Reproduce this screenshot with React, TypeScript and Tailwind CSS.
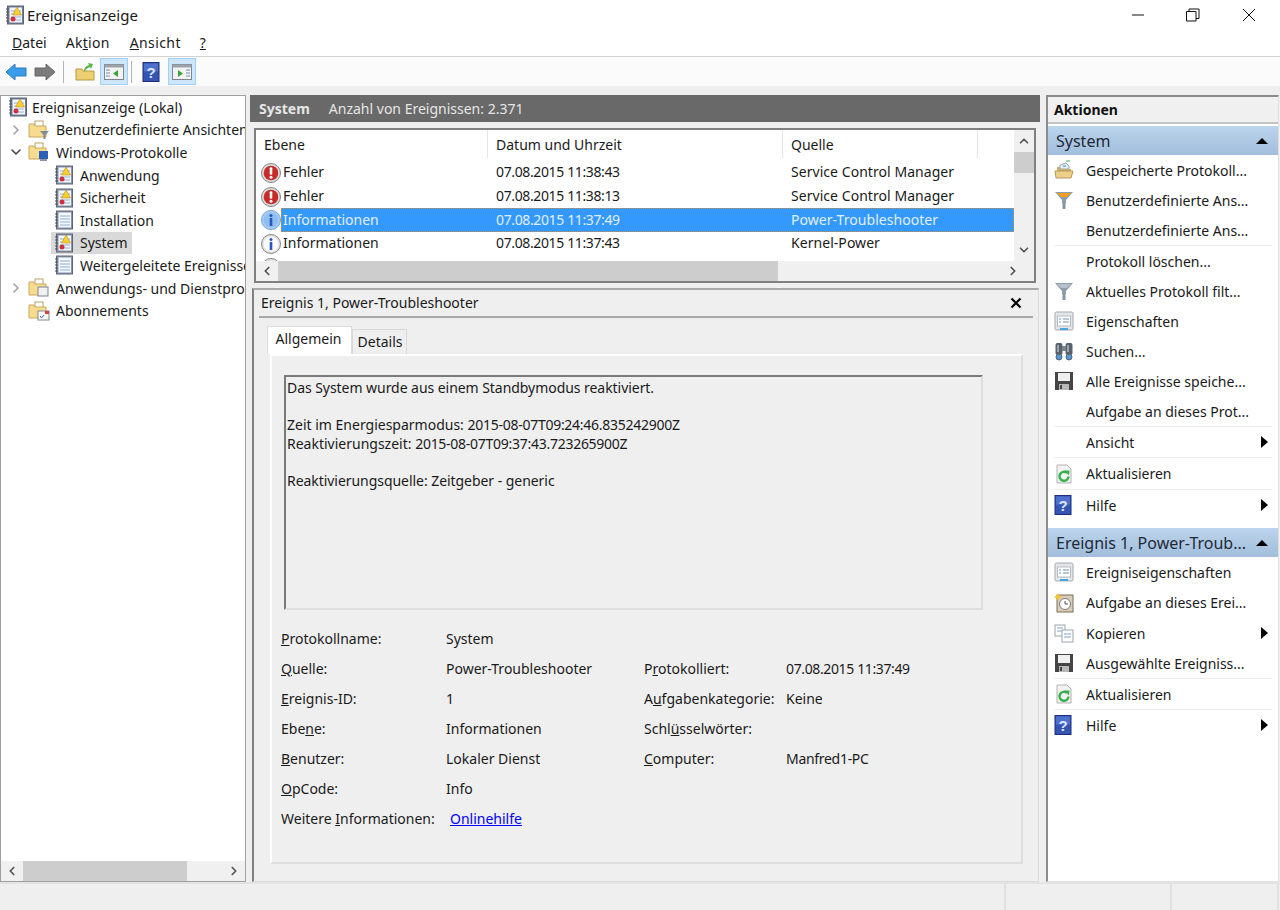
import type { ReactNode } from 'react'
import { ChevronDown, ChevronLeft, ChevronRight, ChevronUp } from 'lucide-react'

function LogIcon({ alert, dark }: { alert?: boolean; dark?: boolean }) {
  return (
    <svg width="20" height="20" viewBox="0 0 20 20" className="shrink-0">
      <rect x="2.500" y="1" width="16" height="18" fill={dark ? '#6f7d9c' : '#8996b0'} stroke="#5d6578" />
      <rect x="4.500" y="2.500" width="12.500" height="15" fill="#f5f7fb" />
      <path d="M1 4h3M1 7h3M1 10h3M1 13h3M1 16h3" stroke="#4f535c" />
      <path d="M6 6h10M6 9h10M6 12h10M6 15h10" stroke="#8fb0d8" />
      {alert && <path d="M12 2l4.500 8h-9z" fill="#f8cf2f" stroke="#c08f18" strokeWidth="0.6" />}
      {alert && <circle cx="8" cy="14" r="2.500" fill="#cf3040" />}
    </svg>
  )
}

function FolderIcon({ badge }: { badge?: ReactNode }) {
  return (
    <svg width="22" height="20" viewBox="0 0 22 20" className="shrink-0">
      <rect x="7" y="1" width="8" height="6" fill="#fff" stroke="#b9a26a" />
      <path d="M1 4h5l1 2h11v11H1z" fill="#f7dc8f" stroke="#c9a95c" />
      {badge}
    </svg>
  )
}

function ErrorIcon() {
  return (
    <svg width="20" height="20" viewBox="0 0 20 20" className="shrink-0">
      <circle cx="10" cy="10" r="9.500" fill="#dcdcdc" stroke="#858585" />
      <circle cx="10" cy="10" r="7.300" fill="#c92b2b" />
      <rect x="8.700" y="4.300" width="2.600" height="7.500" rx="1" fill="#fff" />
      <circle cx="10" cy="14.300" r="1.500" fill="#fff" />
    </svg>
  )
}

function InfoIcon({ selected }: { selected?: boolean }) {
  return (
    <svg width="20" height="20" viewBox="0 0 20 20" className="shrink-0">
      <circle cx="10" cy="10" r="9.500" fill={selected ? '#a9cdf2' : '#e4e4e4'} stroke={selected ? '#6fa4dc' : '#858585'} />
      <circle cx="10" cy="10" r="7.300" fill={selected ? '#8fbef0' : '#fbfbfb'} />
      <circle cx="10" cy="5.500" r="1.500" fill="#2a55c0" />
      <rect x="8.700" y="8" width="2.600" height="8" fill="#2a55c0" />
    </svg>
  )
}

function HelpIcon() {
  return (
    <svg width="18" height="20" viewBox="0 0 18 20" className="shrink-0">
      <rect x="1" y="0.500" width="16" height="19" fill="#3555b5" stroke="#1d2f78" />
      <rect x="2" y="1.500" width="14" height="8" fill="#4d70cc" />
      <text x="9" y="15.500" textAnchor="middle" fontSize="15" fontWeight="700" fill="#dfe6ff" fontFamily="Liberation Sans, sans-serif">?</text>
    </svg>
  )
}

function PaneIcon({ side }: { side: 'left' | 'right' }) {
  return (
    <svg width="20" height="18" viewBox="0 0 20 18">
      <rect x="0.500" y="1.500" width="19" height="15" fill="#f3f3f3" stroke="#7d8690" />
      <rect x="0.500" y="1.500" width="19" height="3" fill="#9aa3ab" />
      {side === 'left' ? (
        <>
          <path d="M2 7h4M2 10h4M2 13h4" stroke="#6f8fb5" />
          <path d="M14 7v7l-5-3.500z" fill="#3aa63a" />
        </>
      ) : (
        <>
          <path d="M14 7h4M14 10h4M14 13h4" stroke="#6f8fb5" />
          <path d="M6 7v7l5-3.500z" fill="#3aa63a" />
        </>
      )}
    </svg>
  )
}

function FunnelIcon({ color }: { color: string }) {
  return (
    <svg width="20" height="20" viewBox="0 0 20 20">
      <path d="M1 2h18l-7 8v3H8v-3z" fill="#8d9dad" />
      <path d="M3 3h14l-4 4H7z" fill={color} />
      <rect x="8.500" y="12" width="3" height="7" fill="#8495a6" />
    </svg>
  )
}

function PropsIcon() {
  return (
    <svg width="20" height="20" viewBox="0 0 20 20">
      <rect x="1" y="1" width="18" height="18" rx="1.500" fill="#e4e6e9" stroke="#a3a8ae" />
      <rect x="3.500" y="5" width="13" height="10" fill="#fff" stroke="#b5bac0" />
      <path d="M5 8h2M9 8h6M5 11h2M9 11h6" stroke="#6f8fb5" />
      <rect x="6" y="17" width="8" height="2" fill="#45a9e0" />
    </svg>
  )
}

function BinocularsIcon() {
  return (
    <svg width="20" height="20" viewBox="0 0 20 20">
      <rect x="1.500" y="2" width="7" height="12" rx="2" fill="#59626c" />
      <rect x="11.500" y="2" width="7" height="12" rx="2" fill="#59626c" />
      <rect x="3" y="4" width="2" height="7" fill="#9aa4ae" />
      <rect x="13" y="4" width="2" height="7" fill="#9aa4ae" />
      <rect x="8" y="5" width="4" height="5" fill="#7c858e" />
      <circle cx="5" cy="16" r="3" fill="#4f97d8" stroke="#59626c" />
      <circle cx="15" cy="16" r="3" fill="#4f97d8" stroke="#59626c" />
    </svg>
  )
}

function SaveIcon() {
  return (
    <svg width="20" height="20" viewBox="0 0 20 20">
      <path d="M1 1h18v18H1z" fill="#454545" />
      <rect x="4" y="2" width="12" height="8" fill="#efefef" />
      <rect x="5" y="13" width="10" height="6" fill="#b8b8b8" />
      <rect x="6" y="14" width="2" height="4" fill="#454545" />
    </svg>
  )
}

function RefreshIcon() {
  return (
    <svg width="20" height="20" viewBox="0 0 20 20">
      <path d="M3 1h10l4 4v14H3z" fill="#f2f2f2" stroke="#b3b3b3" />
      <path d="M14.500 12.500a4.500 4.500 0 1 1-1.500-3.600" fill="none" stroke="#35b04a" strokeWidth="2.400" />
      <path d="M10.500 6.500h5l-.5 5z" fill="#35b04a" />
    </svg>
  )
}

function OpenFolderIcon() {
  return (
    <svg width="20" height="20" viewBox="0 0 20 20">
      <path d="M12 1h4" stroke="#35b04a" />
      <path d="M6 9V5l6-2 3 3v3z" fill="#e8f1fb" stroke="#9ca7b2" />
      <path d="M9 6h3" stroke="#3c84d6" />
      <path d="M3 7h3v2h11v2H3z" fill="#c8ac68" />
      <path d="M1 11h18l-2 7H2z" fill="#ecd08a" stroke="#b9995a" />
    </svg>
  )
}

function ClockIcon() {
  return (
    <svg width="20" height="20" viewBox="0 0 20 20">
      <rect x="3" y="2" width="16" height="17" fill="#d9cdb9" stroke="#7d6e5a" />
      <circle cx="11" cy="11" r="5.500" fill="#fff" stroke="#7c7c7c" />
      <path d="M11 8v3h3" fill="none" stroke="#555" />
      <path d="M4 0l1.200 2.600L8 4 5.200 5.400 4 8 2.800 5.400 0 4l2.800-1.400z" fill="#f5c431" />
    </svg>
  )
}

function CopyIcon() {
  return (
    <svg width="20" height="20" viewBox="0 0 20 20">
      <rect x="1" y="2" width="10" height="11" fill="#fff" stroke="#9aa5b1" />
      <path d="M3 5h6M3 8h6" stroke="#7fa3cf" />
      <rect x="8" y="7" width="11" height="12" fill="#fff" stroke="#9aa5b1" />
      <path d="M10 11h7M10 14h7" stroke="#7fa3cf" />
    </svg>
  )
}

function Caret() {
  return <span className="w-0 h-0 border-y-[6px] border-y-transparent border-l-[7px] border-l-black" />
}

function TreeRow({ indent, arrow, icon, label, selected, tight }: { indent: string; arrow?: 'right' | 'down'; icon: ReactNode; label: string; selected?: boolean; tight?: boolean }) {
  return (
    <div className={`h-[22.6px] flex items-center whitespace-nowrap overflow-hidden ${indent}`}>
      {arrow && (
        <span className="w-[20px] shrink-0 flex justify-center">
          {arrow === 'right' ? <ChevronRight size={16} className="text-[#a0a0a0]" strokeWidth={2.400} /> : <ChevronDown size={16} className="text-[#444]" strokeWidth={2.400} />}
        </span>
      )}
      <span className={`flex items-center h-full ${selected ? 'bg-[#d9d9d9] pl-[3px] pr-[4px]' : 'pl-[2px] pr-[2px]'}`}>
        {icon}
        <span className={tight ? 'ml-[4px]' : 'ml-[6px]'}>{label}</span>
      </span>
    </div>
  )
}

function EventRow({ icon, level, time, source, selected }: { icon: ReactNode; level?: string; time?: string; source?: string; selected?: boolean }) {
  return (
    <div className="h-[23.7px] flex items-center whitespace-nowrap">
      <span className="w-[25px] pl-[5px] shrink-0">{icon}</span>
      <div className={`flex-1 h-full pb-[2px] flex items-center ${selected ? 'bg-[#3399ff] text-[#e0efff] outline-1 -outline-offset-1 outline-dotted outline-[#d58a3c]' : ''}`}>
        <span className="w-[215px] shrink-0 pl-[2px]">{level}</span>
        <span className="w-[295px] shrink-0 tracking-[-0.37px]">{time}</span>
        <span className="tracking-[0.05px]">{source}</span>
      </div>
    </div>
  )
}

function ActionRow({ icon, label, caret, h = 'h-[30px]' }: { icon?: ReactNode; label: string; caret?: boolean; h?: string }) {
  return (
    <div className={`${h} flex items-center pl-[6px] pr-[10px] whitespace-nowrap shrink-0`}>
      <span className="w-[32px] shrink-0 flex">{icon}</span>
      <span className="flex-1">{label}</span>
      {caret && <Caret />}
    </div>
  )
}

function Sep() {
  return <div className="h-px mx-[6px] bg-[#ececec] shrink-0" />
}

function SectionHead({ label }: { label: string }) {
  return (
    <div className="h-[29px] flex items-center justify-between pl-[8px] pr-[10px] bg-gradient-to-b from-[#bcd4ec] to-[#a2bedb] text-[16px] text-[#1e2a38] whitespace-nowrap shrink-0">
      <span>{label}</span>
      <span className="w-0 h-0 border-x-[6px] border-x-transparent border-b-[6px] border-b-black" />
    </div>
  )
}

function Field({ label, value, wide }: { label: ReactNode; value?: ReactNode; wide?: boolean }) {
  return (
    <>
      <span>{label}</span>
      <span className={wide ? 'col-span-3' : ''}>{value}</span>
    </>
  )
}

export default function App() {
  return (
    <div className="w-[1280px] h-[910px] overflow-hidden flex flex-col bg-[#efefef] text-[14px] text-[#1a1a1a] font-['Noto_Sans','Open_Sans',sans-serif]">
      <div className="h-[30px] bg-white flex items-center shrink-0">
        <span className="ml-[5px]"><LogIcon alert dark /></span>
        <span className="ml-[2px] text-[15px]">Ereignisanzeige</span>
        <div className="ml-auto flex items-center text-black">
          <svg width="14" height="14" viewBox="0 0 14 14" className="mr-[41px]"><path d="M1 7h12" stroke="#111" /></svg>
          <svg width="14" height="14" viewBox="0 0 14 14" className="mr-[42px]"><path d="M.5 3.500h9.500v9.500H.5zM3 3.500V1h10v9.500h-3" fill="none" stroke="#111" /></svg>
          <svg width="14" height="14" viewBox="0 0 14 14" className="mr-[24px]"><path d="M1 1l12 12M13 1L1 13" stroke="#111" /></svg>
        </div>
      </div>
      <div className="h-[27px] bg-white flex items-center pl-[12px] pb-[2px] border-b border-[#d2d2d2] shrink-0">
        <span><u>D</u>atei</span>
        <span className="ml-[19px] tracking-[0.3px]">Ak<u>t</u>ion</span>
        <span className="ml-[20px] tracking-[0.4px]"><u>A</u>nsicht</span>
        <span className="ml-[19px]"><u>?</u></span>
      </div>
      <div className="h-[29px] bg-[#fbfbfb] flex items-center pl-[5px] shrink-0">
        <svg width="22" height="18" viewBox="0 0 22 18"><path d="M1 9l9-8v4h11v8H10v4z" fill="#3b9be6" stroke="#2a78c0" /></svg>
        <svg width="22" height="18" viewBox="0 0 22 18" className="ml-[7px]"><path d="M21 9l-9-8v4H1v8h11v4z" fill="#7c7c7c" stroke="#666" /></svg>
        <span className="w-px h-[22px] bg-[#b5b5b5] ml-[7px]" />
        <svg width="20" height="20" viewBox="0 0 20 20" className="ml-[11px]">
          <path d="M1 7h6l1 2h11v9H1z" fill="#eccf71" stroke="#b59a4a" />
          <path d="M9 10c0-4 2-6 5-7l-1-2 5 1-2 5-1-2c-2 1-4 2-6 5z" fill="#59b848" />
        </svg>
        <span className="w-[28px] h-[27px] ml-[5px] bg-[#cde6fb] border border-[#9fd0f5] flex items-center justify-center"><PaneIcon side="left" /></span>
        <span className="w-px h-[22px] bg-[#b5b5b5] ml-[3px]" />
        <span className="ml-[10px]"><HelpIcon /></span>
        <span className="w-[28px] h-[27px] ml-[8px] bg-[#cde6fb] border border-[#9fd0f5] flex items-center justify-center"><PaneIcon side="right" /></span>
      </div>

      <div className="h-[9px] shrink-0" />

      <div className="flex-1 flex min-h-0">
        <div className="w-[246px] h-[787px] shrink-0 bg-white border border-[#a0a0a0] flex flex-col">
          <div className="flex-1 pl-[5px] overflow-hidden">
            <TreeRow indent="" icon={<LogIcon alert dark />} label="Ereignisanzeige (Lokal)" tight />
            <TreeRow indent="" arrow="right" icon={<FolderIcon badge={<path d="M12 11h9l-3.500 4v4h-2v-4z" fill="#7e8c9a" />} />} label="Benutzerdefinierte Ansichten" />
            <TreeRow indent="" arrow="down" icon={<FolderIcon badge={<><rect x="11" y="9" width="9" height="8" fill="#2d5fb8" /><rect x="12" y="17" width="7" height="2" fill="#8d98a6" /></>} />} label="Windows-Protokolle" />
            <TreeRow indent="pl-[46px]" icon={<LogIcon alert />} label="Anwendung" />
            <TreeRow indent="pl-[46px]" icon={<LogIcon alert />} label="Sicherheit" />
            <TreeRow indent="pl-[46px]" icon={<LogIcon />} label="Installation" />
            <TreeRow indent="pl-[45px]" icon={<LogIcon alert />} label="System" selected />
            <TreeRow indent="pl-[46px]" icon={<LogIcon />} label="Weitergeleitete Ereignisse" />
            <TreeRow indent="" arrow="right" icon={<FolderIcon badge={<rect x="10" y="9" width="10" height="9" fill="#f2f2f2" stroke="#7d8690" />} />} label="Anwendungs- und Dienstprotokolle" />
            <div className="pl-[20px]">
              <TreeRow indent="" icon={<FolderIcon badge={<><rect x="10" y="10" width="11" height="9" fill="#fff" stroke="#7d8690" /><rect x="17" y="10" width="4" height="3" fill="#d84040" /><path d="M12 15l1.500 2 2.500-3" fill="none" stroke="#2d5fb8" /></>} />} label="Abonnements" />
            </div>
          </div>
          <div className="h-[20px] bg-[#f0f0f0] flex items-center shrink-0 text-[#555]">
            <span className="w-[22px] flex justify-center"><ChevronLeft size={14} strokeWidth={3} /></span>
            <div className="flex-1 h-full">
              <div className="w-[164px] h-full bg-[#cdcdcd]" />
            </div>
            <span className="w-[22px] flex justify-center"><ChevronRight size={14} strokeWidth={3} /></span>
          </div>
        </div>

        <div className="w-[790px] ml-[4px] mr-[6px] shrink-0 flex flex-col h-[787px]">
          <div className="h-[27px] bg-[#696969] text-[#e6e6e6] flex items-center pl-[9px] shrink-0">
            <span className="font-bold">System</span>
            <span className="ml-[19px]">Anzahl von Ereignissen: 2.371</span>
          </div>
          <div className="h-[155px] mt-[6px] mx-[4px] bg-white border-2 border-[#808080] flex shrink-0 overflow-hidden">
            <div className="flex-1 flex flex-col min-w-0">
              <div className="flex-1 flex min-h-0">
                <div className="flex-1 min-w-0 overflow-hidden">
                  <div className="h-[31px] pb-[3px] flex items-center">
                    <span className="w-[232px] h-full flex items-center pl-[8px] border-r border-[#e5e5e5]">Ebene</span>
                    <span className="w-[295px] h-full flex items-center pl-[8px] border-r border-[#e5e5e5]">Datum und Uhrzeit</span>
                    <span className="w-[195px] h-full flex items-center pl-[8px] border-r border-[#e5e5e5]">Quelle</span>
                  </div>
                  <EventRow icon={<ErrorIcon />} level="Fehler" time="07.08.2015 11:38:43" source="Service Control Manager" />
                  <EventRow icon={<ErrorIcon />} level="Fehler" time="07.08.2015 11:38:13" source="Service Control Manager" />
                  <EventRow icon={<InfoIcon selected />} level="Informationen" time="07.08.2015 11:37:49" source="Power-Troubleshooter" selected />
                  <EventRow icon={<InfoIcon />} level="Informationen" time="07.08.2015 11:37:43" source="Kernel-Power" />
                  <EventRow icon={<InfoIcon />} />
                </div>
                <div className="w-[20px] bg-[#f0f0f0] flex flex-col shrink-0 text-[#555]">
                  <span className="h-[22px] flex items-center justify-center"><ChevronUp size={14} strokeWidth={3} /></span>
                  <div className="h-[21px] bg-[#cdcdcd]" />
                  <div className="flex-1" />
                  <span className="h-[22px] flex items-center justify-center"><ChevronDown size={14} strokeWidth={3} /></span>
                </div>
              </div>
              <div className="h-[20px] bg-[#f0f0f0] flex items-center shrink-0 text-[#555]">
                <span className="w-[22px] flex justify-center"><ChevronLeft size={14} strokeWidth={3} /></span>
                <div className="flex-1 h-full">
                  <div className="w-[500px] h-full bg-[#cdcdcd]" />
                </div>
                <span className="w-[42px] flex justify-center"><ChevronRight size={14} strokeWidth={3} /></span>
              </div>
            </div>
          </div>

          <div className="flex-1 mt-[5px] ml-[2px] mr-[1px] border-t-2 border-l-2 border-t-[#a8a8a8] border-l-[#808080] border-r border-b border-r-[#dcdcdc] border-b-[#dcdcdc] flex flex-col min-h-0">
            <div className="h-[28px] mx-[5px] pb-[1px] flex items-center justify-between border-b-2 border-[#a8a8a8] pr-[11px] pl-[2px] shrink-0">
              <span>Ereignis 1, Power-Troubleshooter</span>
              <svg width="12" height="12" viewBox="0 0 12 12"><path d="M1.500 1.500l9 9M10.500 1.500l-9 9" stroke="#000" strokeWidth="2.200" /></svg>
            </div>
            <div className="flex items-end h-[36px] pl-[13px] shrink-0">
              <span className="h-[28px] w-[85px] pb-[4px] pr-[2px] bg-white border border-[#dcdcdc] border-b-0 flex items-center justify-center">Allgemein</span>
              <span className="h-[25px] w-[55px] pb-[2px] pl-[1px] border border-[#d9d9d9] border-b-0 flex items-center justify-center">Details</span>
            </div>
            <div className="ml-[16px] mr-[15px] h-[510px] border-t-2 border-l-2 border-white border-r-2 border-b-2 border-r-[#dcdcdc] border-b-[#dcdcdc] pl-[12px] pr-[38px] pt-[19px] shrink-0">
              <div className="h-[235px] border-2 border-[#7a7a7a] border-r-[#dedede] border-b-[#dedede] pl-px pt-[2px] leading-[18.7px]">
                <p className="tracking-[-0.05px]">Das System wurde aus einem Standbymodus reaktiviert.</p>
                <p className="mt-[18.7px]">Zeit im Energiesparmodus: <span className="tracking-[-0.27px]">2015-08-07T09:24:46.835242900Z</span></p>
                <p>Reaktivierungszeit: <span className="tracking-[-0.27px]">2015-08-07T09:37:43.723265900Z</span></p>
                <p className="mt-[18.7px] tracking-[-0.05px]">Reaktivierungsquelle: Zeitgeber - generic</p>
              </div>
              <div className="mt-[13px] -ml-[3px] grid grid-cols-[165px_198px_142px_1fr] auto-rows-[30px] items-center">
                <Field label={<><u>P</u>rotokollname:</>} value="System" wide />
                <Field label={<><u>Q</u>uelle:</>} value="Power-Troubleshooter" />
                <Field label={<>P<u>r</u>otokolliert:</>} value={<span className="tracking-[-0.37px]">07.08.2015 11:37:49</span>} />
                <Field label={<><u>E</u>reignis-ID:</>} value="1" />
                <Field label={<>A<u>u</u>fgabenkategorie:</>} value="Keine" />
                <Field label={<>Ebe<u>n</u>e:</>} value="Informationen" />
                <Field label={<>Schl<u>ü</u>sselwörter:</>} />
                <Field label={<><u>B</u>enutzer:</>} value="Lokaler Dienst" />
                <Field label={<><u>C</u>omputer:</>} value={<span className="tracking-[-0.3px]">Manfred1-PC</span>} />
                <Field label={<><u>O</u>pCode:</>} value="Info" wide />
                <span className="whitespace-nowrap">Weitere <u>I</u>nformationen:</span>
                <a href="#" className="col-span-3 underline text-[#0000ff] pl-[4px]">Onlinehilfe</a>
              </div>
            </div>
          </div>
        </div>

        <div className="w-[233px] h-[787px] shrink-0 bg-white border-t-2 border-l-2 border-t-[#8c8c8c] border-l-[#8c8c8c] border-r border-b border-r-[#e0e0e0] border-b-[#e0e0e0] flex flex-col">
          <div className="h-[27px] bg-[#f0f0f0] flex items-center pl-[6px] font-bold text-[#111] border-b-2 border-[#c4c4c4] shrink-0">Aktionen</div>
          <div className="h-[2px] shrink-0" />
          <SectionHead label="System" />
          <ActionRow icon={<OpenFolderIcon />} label="Gespeicherte Protokoll..." />
          <ActionRow icon={<FunnelIcon color="#f0a020" />} label="Benutzerdefinierte Ans..." />
          <ActionRow label="Benutzerdefinierte Ans..." />
          <Sep />
          <ActionRow label="Protokoll löschen..." />
          <ActionRow icon={<FunnelIcon color="#b5c0cc" />} label="Aktuelles Protokoll filt..." />
          <ActionRow icon={<PropsIcon />} label="Eigenschaften" />
          <ActionRow icon={<BinocularsIcon />} label="Suchen..." />
          <ActionRow icon={<SaveIcon />} label="Alle Ereignisse speiche..." />
          <ActionRow label="Aufgabe an dieses Prot..." />
          <Sep />
          <ActionRow label="Ansicht" caret />
          <Sep />
          <ActionRow icon={<RefreshIcon />} label="Aktualisieren" h="h-[31px]" />
          <Sep />
          <ActionRow icon={<HelpIcon />} label="Hilfe" caret />
          <div className="h-[8px] shrink-0" />
          <SectionHead label="Ereignis 1, Power-Troub..." />
          <ActionRow icon={<PropsIcon />} label="Ereigniseigenschaften" />
          <ActionRow icon={<ClockIcon />} label="Aufgabe an dieses Erei..." h="h-[31px]" />
          <ActionRow icon={<CopyIcon />} label="Kopieren" caret />
          <ActionRow icon={<SaveIcon />} label="Ausgewählte Ereigniss..." />
          <Sep />
          <ActionRow icon={<RefreshIcon />} label="Aktualisieren" />
          <Sep />
          <ActionRow icon={<HelpIcon />} label="Hilfe" caret />
        </div>
      </div>

      <div className="h-[28px] shrink-0 border-t-2 border-[#e3e3e3] flex justify-end">
        <span className="w-[166px] border-l-2 border-[#e0e0e0]" />
        <span className="w-[107px] border-l-2 border-[#e0e0e0]" />
        <span className="w-[3px] border-l-2 border-[#e0e0e0]" />
      </div>
    </div>
  )
}
